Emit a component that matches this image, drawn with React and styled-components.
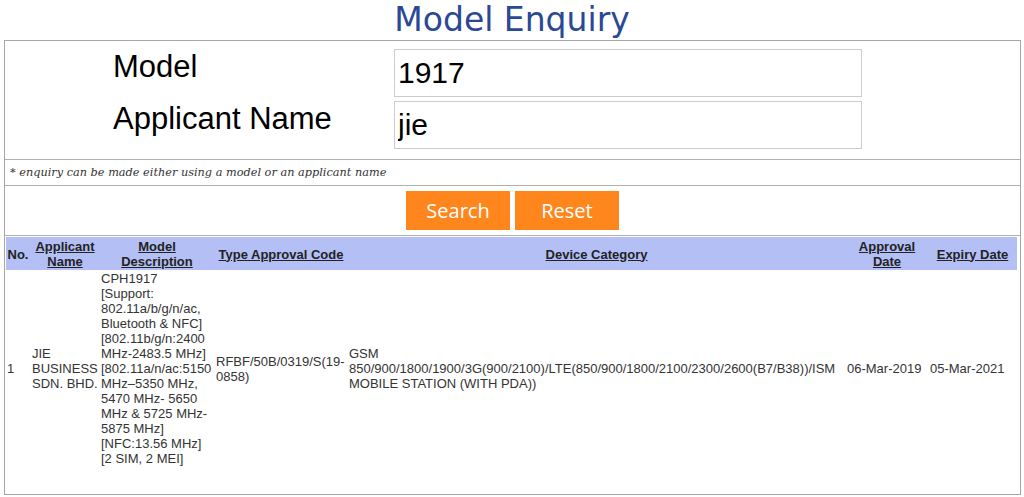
import styled, { createGlobalStyle } from 'styled-components';

const GlobalStyle = createGlobalStyle`
  body {
    margin: 0;
    background: #fff;
    font-family: 'Liberation Sans', Arial, sans-serif;
  }
`;

const Title = styled.h1`
  margin: 0;
  height: 40px;
  line-height: 40px;
  text-align: center;
  font-family: 'DejaVu Sans', sans-serif;
  font-weight: 400;
  font-size: 33px;
  color: #2b4896;
`;

const Box = styled.div`
  margin: 0 3px 0 4px;
  border: 1px solid #a6a6a6;
`;

const FormGrid = styled.div`
  display: grid;
  grid-template-columns: 282px 468px;
  row-gap: 4px;
  padding: 8px 0 10px 108px;
`;

const Label = styled.label`
  align-self: start;
  font-size: 31px;
  color: #000;
`;

const Input = styled.input`
  box-sizing: border-box;
  width: 468px;
  height: 48px;
  margin: 0 0 0 -1px;
  padding: 0 3px;
  border: 1px solid #cccccc;
  font-family: 'Liberation Sans', Arial, sans-serif;
  font-size: 30px;
  color: #000;
  outline: none;
`;

const Note = styled.div`
  height: 25px;
  line-height: 25px;
  padding-left: 5px;
  border-top: 1px solid #b0b0b0;
  font-family: 'DejaVu Serif', serif;
  font-style: italic;
  font-size: 11.3px;
  color: #333;
`;

const ButtonRow = styled.div`
  display: flex;
  justify-content: center;
  gap: 5px;
  padding: 5px 0;
  border-top: 1px solid #b0b0b0;
`;

const Button = styled.button`
  width: 104px;
  height: 39px;
  border: none;
  background: #ff861c;
  color: #fff;
  font-family: 'Open Sans', sans-serif;
  font-size: 20px;
  cursor: pointer;
`;

const TableSection = styled.div`
  padding: 1px 0 27px 1px;
  border-top: 1px solid #b0b0b0;
`;

const Table = styled.table`
  width: 1011px;
  table-layout: fixed;
  border-collapse: separate;
  border-spacing: 0;
  font-size: 13px;
`;

const Th = styled.th`
  background: #b4bff6;
  padding: 2px 2px 1px 1px;
  font-weight: 700;
  text-align: center;
  vertical-align: middle;
  color: #222;
`;

const HeadLink = styled.span`
  text-decoration: underline;
  cursor: pointer;
`;

const Td = styled.td`
  padding: 1px 2px 1px 1px;
  vertical-align: middle;
  text-align: left;
  color: #333;
`;

const columns = [
  { key: 'no', label: 'No.', width: 25, link: false },
  { key: 'applicant', label: 'Applicant Name', width: 69, link: true },
  { key: 'model', label: 'Model Description', width: 115, link: true },
  { key: 'code', label: 'Type Approval Code', width: 133, link: true },
  { key: 'category', label: 'Device Category', width: 498, link: true },
  { key: 'approval', label: 'Approval Date', width: 83, link: true },
  { key: 'expiry', label: 'Expiry Date', width: 88, link: true },
];

const rows = [
  {
    no: '1',
    applicant: 'JIE BUSINESS SDN. BHD.',
    model: (
      <>
        CPH1917 [Support: 802.11a/b/g/n/ac, Bluetooth &amp; NFC] [802.11b/g/n:2400 MHz-2483.5 MHz]
        [802.11a/n/ac:5150 MHz–5350 MHz, 5470 MHz- 5650 MHz &amp; 5725 MHz-<wbr />5875 MHz] [NFC:13.56
        MHz] [2 SIM, 2 MEI]
      </>
    ),
    code: (
      <>
        RFBF/50B/0319/S(19-<wbr />0858)
      </>
    ),
    category:
      'GSM 850/900/1800/1900/3G(900/2100)/LTE(850/900/1800/2100/2300/2600(B7/B38))/ISM MOBILE STATION (WITH PDA))',
    approval: '06-Mar-2019',
    expiry: '05-Mar-2021',
  },
];

const App = () => {
  return (
    <>
      <GlobalStyle />
      <Title>Model Enquiry</Title>
      <Box>
        <FormGrid>
          <Label>Model</Label>
          <Input defaultValue='1917' />
          <Label>Applicant Name</Label>
          <Input defaultValue='jie' />
        </FormGrid>
        <Note>* enquiry can be made either using a model or an applicant name</Note>
        <ButtonRow>
          <Button>Search</Button>
          <Button>Reset</Button>
        </ButtonRow>
        <TableSection>
          <Table>
            <colgroup>
              {columns.map((c) => (
                <col key={c.key} style={{ width: c.width }} />
              ))}
            </colgroup>
            <thead>
              <tr>
                {columns.map((c) => (
                  <Th key={c.key}>{c.link ? <HeadLink>{c.label}</HeadLink> : c.label}</Th>
                ))}
              </tr>
            </thead>
            <tbody>
              {rows.map((row) => (
                <tr key={row.no}>
                  {columns.map((c) => (
                    <Td key={c.key}>{row[c.key]}</Td>
                  ))}
                </tr>
              ))}
            </tbody>
          </Table>
        </TableSection>
      </Box>
    </>
  );
};

export default App;
